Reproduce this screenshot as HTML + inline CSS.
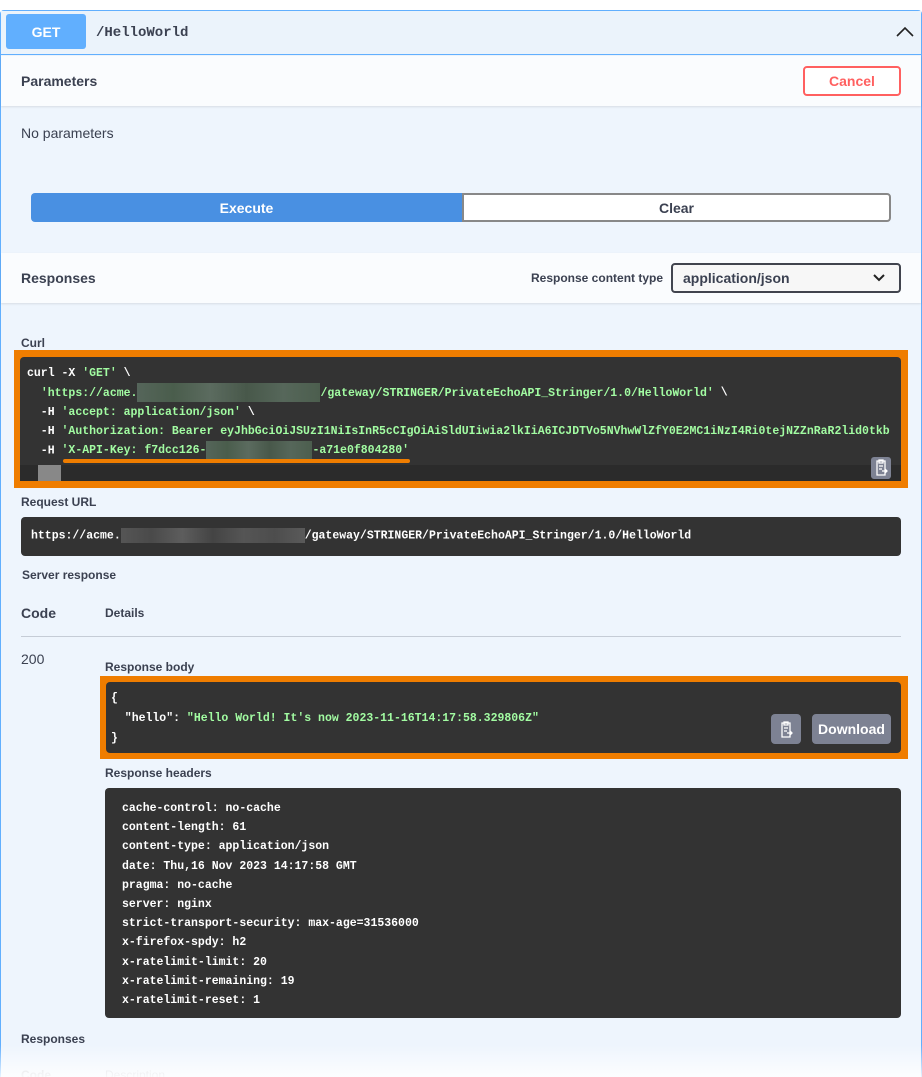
<!DOCTYPE html>
<html style="width:922px;height:1077px;overflow:hidden"><head><meta charset="utf-8"><style>
*{box-sizing:border-box;margin:0;padding:0}
body{width:922px;height:1077px;overflow:hidden;background:#fff;font-family:"Liberation Sans",sans-serif;color:#3b4151;position:relative}
.blk{position:absolute;left:0;top:10px;width:922px;height:1080px;background:#eef5fd;border:1px solid #61affe;border-bottom:none;border-radius:4px 4px 0 0}
.abs{position:absolute}
.mono{font-family:"Liberation Mono",monospace;font-size:11.5px;font-weight:bold;color:#fff}
.dark{background:#333;border-radius:4px}
.lbl{font-size:12px;font-weight:bold;color:#3b4151}
.g{color:#a2fca2}
.blur{display:inline-block;height:19px;vertical-align:middle;background:linear-gradient(90deg,#55655a,#4a5d4c,#5b6b5f,#48584a,#56675a,#4c5e4e)}
</style></head><body>
<div class="blk"></div>
<div class="abs" style="left:1px;top:11px;width:920px;height:44px;background:#ebf3fb;border-bottom:1px solid #61affe"></div>
<div class="abs" style="left:6px;top:14px;width:80px;height:35px;background:#61affe;border-radius:3px;color:#fff;font-weight:bold;font-size:14px;text-align:center;line-height:37px">GET</div>
<div class="abs" style="left:96px;top:25px;font-family:'Liberation Mono',monospace;font-weight:bold;font-size:14px;color:#3b4151">/HelloWorld</div>
<svg class="abs" style="left:896px;top:26px" width="18" height="12"><path d="M1 10 L9 2 L17 10" fill="none" stroke="#222" stroke-width="1.6"/></svg>
<div class="abs" style="left:1px;top:56px;width:920px;height:50px;background:#fafcfe;box-shadow:0 1px 2px rgba(0,0,0,.1)"></div>
<div class="abs" style="left:21px;top:73px;font-size:14px;font-weight:bold">Parameters</div>
<div class="abs" style="left:803px;top:66px;width:98px;height:30px;border:2px solid #ff6060;border-radius:4px;color:#ff6060;font-weight:bold;font-size:14px;text-align:center;line-height:26px;background:#fff">Cancel</div>
<div class="abs" style="left:21px;top:125px;font-size:14px">No parameters</div>
<div class="abs" style="left:31px;top:193px;width:431px;height:29px;background:#4990e2;border-radius:4px 0 0 4px;color:#fff;font-weight:bold;font-size:14px;text-align:center;line-height:30px">Execute</div>
<div class="abs" style="left:462px;top:193px;width:429px;height:29px;border:2px solid #888;border-radius:0 4px 4px 0;font-weight:bold;font-size:14px;text-align:center;line-height:26px;background:#fff">Clear</div>
<div class="abs" style="left:1px;top:253px;width:920px;height:50px;background:#fafcfe;box-shadow:0 1px 2px rgba(0,0,0,.1)"></div>
<div class="abs" style="left:21px;top:270px;font-size:14px;font-weight:bold">Responses</div>
<div class="abs lbl" style="left:531px;top:271px">Response content type</div>
<div class="abs" style="left:671px;top:263px;width:230px;height:30px;border:2px solid #41444e;border-radius:4px;background:#f7f7f7;font-weight:bold;font-size:14px;padding-left:10px;line-height:26px">application/json</div>
<svg class="abs" style="left:873px;top:274px" width="12" height="8"><path d="M1 1 L6 6 L11 1" fill="none" stroke="#222" stroke-width="2"/></svg>
<div class="abs lbl" style="left:21px;top:336px">Curl</div>
<div class="abs" style="left:14px;top:350px;width:894px;height:138px;background:#ef7d00"></div>
<div class="abs dark mono" style="left:20px;top:357px;width:881px;height:124px;padding:7px 0 0 7px;line-height:19px;white-space:pre;overflow:hidden">curl -X <span class="g">'GET'</span> \
  <span class="g">'https://acme.<span class="blur" style="width:183px"></span>/gateway/STRINGER/PrivateEchoAPI_Stringer/1.0/HelloWorld'</span> \
  -H <span class="g">'accept: application/json'</span> \
  -H <span class="g">'Authorization: Bearer eyJhbGciOiJSUzI1NiIsInR5cCIgOiAiSldUIiwia2lkIiA6ICJDTVo5NVhwWlZfY0E2MC1iNzI4Ri0tejNZZnRaR2lid0tkb</span>
  -H <span class="g">'X-API-Key: f7dcc126-<span class="blur" style="width:106px"></span>-a71e0f804280'</span></div>
<div class="abs" style="left:63px;top:459px;width:347px;height:4px;background:#ef7d00;border-radius:2px"></div>
<div class="abs" style="left:20px;top:465px;width:881px;height:16px;background:#2b2b2b"></div>
<div class="abs" style="left:38px;top:465px;width:23px;height:16px;background:#888"></div>
<svg class="abs" style="left:871px;top:457px" width="20" height="22"><rect x="0" y="0" width="20" height="22" rx="3" fill="#7d8293"/><path d="M6 4h8v14H6z M8 3h4v3H8z M8 9h4 M8 12h3 M11 14h5 M14 12l2 2-2 2" fill="none" stroke="#fff" stroke-width="1.3"/></svg>
<div class="abs lbl" style="left:21px;top:495px">Request URL</div>
<div class="abs dark mono" style="left:21px;top:517px;width:880px;height:39px;padding:11px 0 0 10px">https://acme.<span class="blur" style="width:184px;height:15px;background:linear-gradient(90deg,#555,#4a4a4a,#5d5d5d,#444,#555,#4d4d4d,#5a5a5a)"></span>/gateway/STRINGER/PrivateEchoAPI_Stringer/1.0/HelloWorld</div>
<div class="abs lbl" style="left:22px;top:568px">Server response</div>
<div class="abs" style="left:21px;top:605px;font-size:14px;font-weight:bold">Code</div>
<div class="abs lbl" style="left:105px;top:606px">Details</div>
<div class="abs" style="left:21px;top:636px;width:880px;height:1px;background:#c5ccd6"></div>
<div class="abs" style="left:21px;top:651px;font-size:14px">200</div>
<div class="abs lbl" style="left:105px;top:660px">Response body</div>
<div class="abs" style="left:100px;top:676px;width:808px;height:83px;background:#ef7d00"></div>
<div class="abs dark mono" style="left:106px;top:682px;width:795px;height:71px;padding:7px 0 0 5px;line-height:20px;white-space:pre">{
  "hello": <span class="g">"Hello World! It's now 2023-11-16T14:17:58.329806Z"</span>
}</div>
<svg class="abs" style="left:771px;top:714px" width="30" height="30"><rect width="30" height="30" rx="4" fill="#7d8293"/><path d="M11 9h8v14h-8z M13 8h4v3h-4z M13 14h4 M13 17h3 M16 19h5 M19 17l2 2-2 2" fill="none" stroke="#fff" stroke-width="1.3"/></svg>
<div class="abs" style="left:812px;top:714px;width:79px;height:30px;background:#7d8293;border-radius:4px;color:#fff;font-weight:bold;font-size:14px;text-align:center;line-height:30px">Download</div>
<div class="abs lbl" style="left:105px;top:766px">Response headers</div>
<div class="abs dark mono" style="left:105px;top:788px;width:796px;height:230px;padding:11px 0 0 17px;line-height:19.2px;white-space:pre">cache-control: no-cache 
content-length: 61 
content-type: application/json 
date: Thu,16 Nov 2023 14:17:58 GMT 
pragma: no-cache 
server: nginx 
strict-transport-security: max-age=31536000 
x-firefox-spdy: h2 
x-ratelimit-limit: 20 
x-ratelimit-remaining: 19 
x-ratelimit-reset: 1 </div>
<div class="abs lbl" style="left:21px;top:1032px">Responses</div>
<div class="abs" style="left:21px;top:1068px;font-size:12px;font-weight:bold;color:#c8ccd3">Code</div>
<div class="abs" style="left:105px;top:1068px;font-size:12px;color:#c8ccd3">Description</div>
<div class="abs" style="left:0;top:1045px;width:922px;height:32px;background:linear-gradient(rgba(255,255,255,0),rgba(255,255,255,.85))"></div>
</body></html>
